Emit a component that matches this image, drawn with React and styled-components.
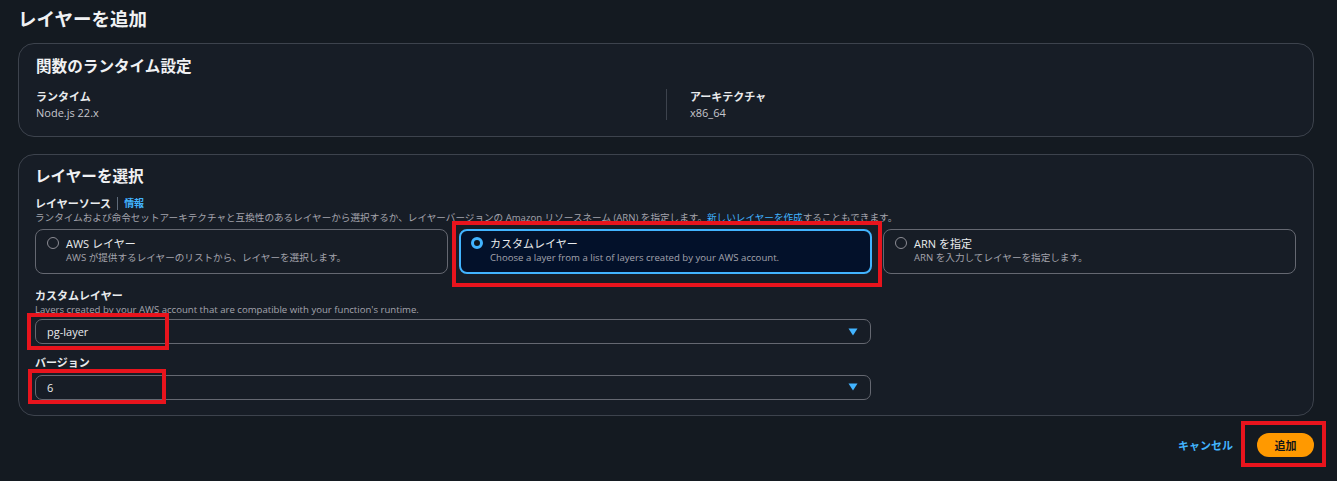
import React from "react";
import styled, { createGlobalStyle } from "styled-components";

const GlobalStyle = createGlobalStyle`
  html, body { margin: 0; padding: 0; background: #141a21; }
  body {
    font-family: "Open Sans", "Noto Sans CJK JP", sans-serif;
    color: #c6c6cd;
    -webkit-font-smoothing: antialiased;
  }
  * { box-sizing: border-box; }
`;

const Page = styled.div`
  width: 1337px;
  height: 481px;
  padding: 7px 23px 0 18px;
  display: flex;
  flex-direction: column;
  background: #141a21;
  overflow: hidden;
`;

const PageTitle = styled.h1`
  margin: 0 0 12px 0;
  font-size: 18.5px;
  line-height: 24px;
  font-weight: 700;
  color: #f0f1f3;
`;

const Card = styled.section`
  background: #171d26;
  border: 1px solid #3d434d;
  border-radius: 16px;
  padding: ${(p) => p.$pad};
  display: flex;
  flex-direction: column;
  height: ${(p) => p.$h}px;
  margin-bottom: ${(p) => p.$mb || "0"};
`;

const CardHeading = styled.h2`
  margin: 0;
  font-size: 15.6px;
  line-height: 20px;
  font-weight: 700;
  color: #f0f1f3;
`;

const KVGrid = styled.div`
  display: grid;
  grid-template-columns: 1fr 1fr;
  margin-top: 13px;
`;

const KVItem = styled.div`
  padding-left: ${(p) => (p.$divided ? "23px" : "0")};
  border-left: ${(p) => (p.$divided ? "1px solid #3d434d" : "none")};
  display: flex;
  flex-direction: column;
`;

const Label = styled.div`
  font-size: 11px;
  line-height: 15.6px;
  font-weight: 700;
  color: #e9ebed;
  display: flex;
  align-items: center;
`;

const Value = styled.div`
  font-size: 11px;
  line-height: 15.6px;
  color: #c6c6cd;
`;

const Info = styled.span`
  color: #42b4ff;
  font-weight: 700;
  font-size: 10px;
  margin-left: 6px;
  padding-left: 6px;
  border-left: 1px solid #5f6b7a;
  line-height: 13px;
`;

const Description = styled.div`
  font-size: 9.6px;
  line-height: 12.5px;
  color: #a4a4ad;
  white-space: nowrap;
`;

const InlineLink = styled.span`
  color: #42b4ff;
  text-decoration: underline;
`;

const Field = styled.div`
  display: flex;
  flex-direction: column;
  margin-top: ${(p) => p.$mt || "0"};
`;

const TileGrid = styled.div`
  display: grid;
  grid-template-columns: repeat(3, 1fr);
  gap: 11px;
  margin-top: 5px;
`;

const Tile = styled.div`
  position: relative;
  height: 45px;
  border-radius: 8px;
  border: ${(p) => (p.$selected ? "2px solid #42b4ff" : "1px solid #656871")};
  background: ${(p) => (p.$selected ? "#03112a" : "transparent")};
  padding: ${(p) => (p.$selected ? "5px 10px 7px 10px" : "6px 11px 8px 11px")};
  display: flex;
  gap: 7px;
`;

const Radio = styled.span`
  flex: none;
  width: 12px;
  height: 12px;
  margin-top: 1px;
  border-radius: 50%;
  border: ${(p) => (p.$checked ? "3.5px solid #42b4ff" : "1.3px solid #8c8c94")};
  background: ${(p) => (p.$checked ? "#0f141a" : "transparent")};
`;

const TileText = styled.div`
  display: flex;
  flex-direction: column;
`;

const TileTitle = styled.div`
  font-size: 11px;
  line-height: 15.6px;
  color: #e9ebed;
`;

const SelectBox = styled.div`
  position: relative;
  width: 836px;
  height: 25px;
  margin-top: ${(p) => p.$mt || "3px"};
  border: 1px solid #656871;
  border-radius: 7px;
  padding: 0 12px 0 11px;
  display: flex;
  align-items: center;
  justify-content: space-between;
  font-size: 11px;
  color: #e9ebed;
`;

const Caret = styled.svg`
  width: 10px;
  height: 8px;
`;

const Annotation = styled.div`
  position: absolute;
  border: 4px solid #e8141d;
  pointer-events: none;
  top: ${(p) => p.$top}px;
  left: ${(p) => p.$left}px;
  width: ${(p) => p.$w}px;
  height: ${(p) => p.$h}px;
`;

const Footer = styled.div`
  display: flex;
  justify-content: flex-end;
  align-items: center;
  gap: 24px;
  margin-top: 17px;
`;

const LinkButton = styled.span`
  color: #42b4ff;
  font-weight: 700;
  font-size: 11px;
`;

const PrimaryWrap = styled.div`
  position: relative;
`;

const PrimaryButton = styled.button`
  width: 57px;
  height: 24px;
  border: none;
  border-radius: 12px;
  background: #ff9900;
  color: #0f141a;
  font-family: inherit;
  font-weight: 700;
  font-size: 11px;
  padding: 0;
`;

const CaretIcon = () => (
  <Caret viewBox="0 0 10 8">
    <path d="M0.5 0.5 L9.5 0.5 L5 7.5 Z" fill="#42b4ff" />
  </Caret>
);

export default function App() {
  return (
    <>
      <GlobalStyle />
      <Page>
        <PageTitle>レイヤーを追加</PageTitle>

        <Card $pad="12px 17px 15px 17px" $mb="17px" $h={94}>
          <CardHeading>関数のランタイム設定</CardHeading>
          <KVGrid>
            <KVItem>
              <Label>ランタイム</Label>
              <Value>Node.js 22.x</Value>
            </KVItem>
            <KVItem $divided>
              <Label>アーキテクチャ</Label>
              <Value>x86_64</Value>
            </KVItem>
          </KVGrid>
        </Card>

        <Card $pad="11px 17px 16px 16px" $h={262}>
          <CardHeading>レイヤーを選択</CardHeading>
          <Field $mt="10px">
            <Label>
              レイヤーソース<Info>情報</Info>
            </Label>
            <Description>
              ランタイムおよび命令セットアーキテクチャと互換性のあるレイヤーから選択するか、レイヤーバージョンの
              Amazon リソースネーム (ARN) を指定します。<InlineLink>新しいレイヤーを作成</InlineLink>することもできます。
            </Description>
          </Field>
          <TileGrid>
            <Tile>
              <Radio />
              <TileText>
                <TileTitle>AWS レイヤー</TileTitle>
                <Description>AWS が提供するレイヤーのリストから、レイヤーを選択します。</Description>
              </TileText>
            </Tile>
            <Tile $selected>
              <Radio $checked />
              <TileText>
                <TileTitle>カスタムレイヤー</TileTitle>
                <Description>Choose a layer from a list of layers created by your AWS account.</Description>
              </TileText>
              <Annotation $top={-10} $left={-9} $w={430} $h={66} />
            </Tile>
            <Tile>
              <Radio />
              <TileText>
                <TileTitle>ARN を指定</TileTitle>
                <Description>ARN を入力してレイヤーを指定します。</Description>
              </TileText>
            </Tile>
          </TileGrid>

          <Field $mt="14px">
            <Label>カスタムレイヤー</Label>
            <Description>Layers created by your AWS account that are compatible with your function's runtime.</Description>
            <SelectBox>
              <span>pg-layer</span>
              <CaretIcon />
              <Annotation $top={-7} $left={-9} $w={142} $h={37} />
            </SelectBox>
          </Field>

          <Field $mt="11px">
            <Label>バージョン</Label>
            <SelectBox $mt="4px">
              <span>6</span>
              <CaretIcon />
              <Annotation $top={-7} $left={-8} $w={138} $h={35} />
            </SelectBox>
          </Field>
        </Card>

        <Footer>
          <LinkButton>キャンセル</LinkButton>
          <PrimaryWrap>
            <PrimaryButton>追加</PrimaryButton>
            <Annotation $top={-12} $left={-16} $w={85} $h={46} />
          </PrimaryWrap>
        </Footer>
      </Page>
    </>
  );
}
